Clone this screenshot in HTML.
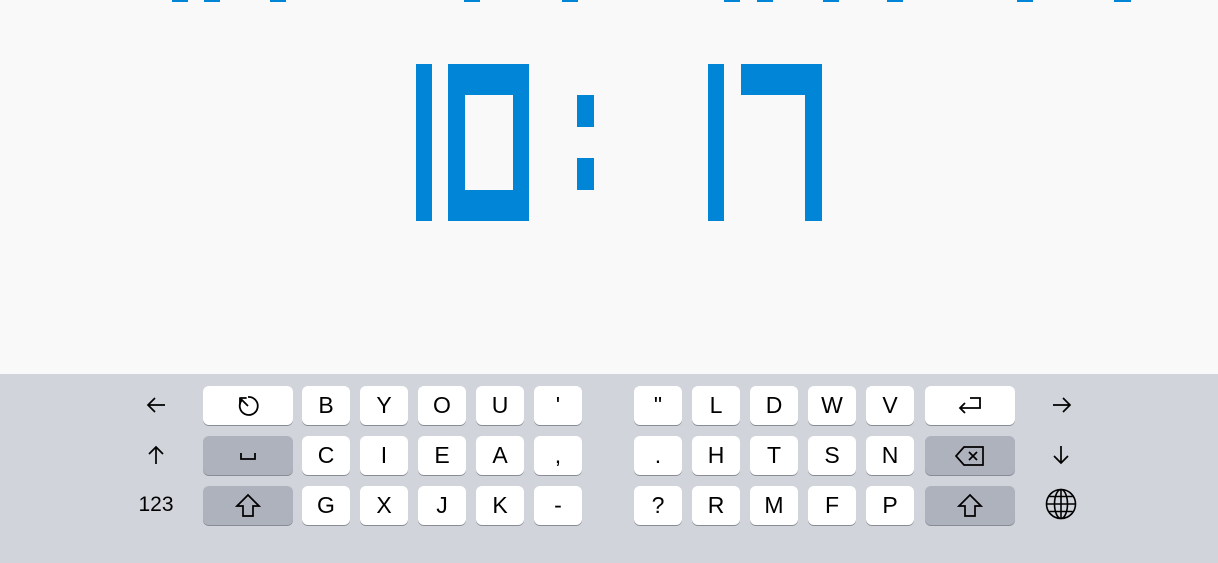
<!DOCTYPE html>
<html><head><meta charset="utf-8"><style>
*{margin:0;padding:0;box-sizing:border-box}
body{width:1218px;height:563px;background:#f9f9f9;position:relative;overflow:hidden;font-family:"Liberation Sans",sans-serif}
.b{position:absolute;background:#0085d7}
.kb{position:absolute;left:0;top:374px;width:1218px;height:189px;background:#d1d4da}
.k{position:absolute;width:48px;height:39px;background:#fff;border-radius:6px;box-shadow:0 1px 0 #888c94;display:flex;align-items:center;justify-content:center;font-size:23px;color:#000}
.w{width:90px}
.d{background:#adb2bc}
.t{position:absolute;font-size:21px;color:#000;width:50px;text-align:center}
.a{position:absolute}
svg{display:block}
</style></head><body>
<div class="b" style="left:172px;top:0;width:16px;height:2px"></div>
<div class="b" style="left:204px;top:0;width:16px;height:2px"></div>
<div class="b" style="left:270px;top:0;width:16px;height:2px"></div>
<div class="b" style="left:464px;top:0;width:16px;height:2px"></div>
<div class="b" style="left:562px;top:0;width:16px;height:2px"></div>
<div class="b" style="left:724px;top:0;width:16px;height:2px"></div>
<div class="b" style="left:757px;top:0;width:16px;height:2px"></div>
<div class="b" style="left:823px;top:0;width:16px;height:2px"></div>
<div class="b" style="left:887px;top:0;width:16px;height:2px"></div>
<div class="b" style="left:1017px;top:0;width:16px;height:2px"></div>
<div class="b" style="left:1114px;top:0;width:17px;height:2px"></div>

<div class="b" style="left:416px;top:64px;width:16px;height:157px"></div>
<div class="b" style="left:448px;top:64px;width:81px;height:157px"></div>
<div style="position:absolute;left:465px;top:95px;width:48px;height:95px;background:#f9f9f9"></div>
<div class="b" style="left:577px;top:95px;width:17px;height:32px"></div>
<div class="b" style="left:577px;top:158px;width:17px;height:32px"></div>
<div class="b" style="left:708px;top:64px;width:16px;height:157px"></div>
<div class="b" style="left:741px;top:64px;width:81px;height:31px"></div>
<div class="b" style="left:805px;top:64px;width:17px;height:157px"></div>

<div class="kb">
<div class="a" style="left:146px;top:22px"><svg width="20" height="18" viewBox="0 0 20 18" fill="none" stroke="#000" stroke-width="1.7"><path d="M19 9H2M9 2L2 9l7 7"/></svg></div>
<div class="a" style="left:147px;top:71px"><svg width="18" height="20" viewBox="0 0 18 20" fill="none" stroke="#000" stroke-width="1.7"><path d="M9 19V2M2 9l7-7 7 7"/></svg></div>
<div class="t" style="left:131px;top:119px">123</div>
<div class="a" style="left:1052px;top:22px"><svg width="20" height="18" viewBox="0 0 20 18" fill="none" stroke="#000" stroke-width="1.7"><path d="M1 9h17M11 2l7 7-7 7"/></svg></div>
<div class="a" style="left:1052px;top:71px"><svg width="18" height="20" viewBox="0 0 18 20" fill="none" stroke="#000" stroke-width="1.7"><path d="M9 1v17M2 11l7 7 7-7"/></svg></div>
<div class="a" style="left:1045px;top:114px"><svg width="32" height="32" viewBox="0 0 32 32" fill="none" stroke="#000" stroke-width="1.6"><circle cx="16" cy="16" r="14.5"/><ellipse cx="16" cy="16" rx="6.5" ry="14.5"/><line x1="16" y1="1.5" x2="16" y2="30.5"/><line x1="1.5" y1="16" x2="30.5" y2="16"/><path d="M4.5 8.5h23M4.5 23.5h23"/></svg></div>

<div class="k w" style="left:203px;top:12px"><svg width="26" height="26" viewBox="0 0 26 26" fill="none" stroke="#000" stroke-width="1.8"><path d="M7 7A9 9 0 1 0 13 4"/><path d="M6 6l7 7"/><path d="M5 5v6M5 5h6" stroke-linecap="round"/></svg></div>
<div class="k" style="left:302px;top:12px">B</div>
<div class="k" style="left:360px;top:12px">Y</div>
<div class="k" style="left:418px;top:12px">O</div>
<div class="k" style="left:476px;top:12px">U</div>
<div class="k" style="left:534px;top:12px">'</div>
<div class="k" style="left:634px;top:12px">"</div>
<div class="k" style="left:692px;top:12px">L</div>
<div class="k" style="left:750px;top:12px">D</div>
<div class="k" style="left:808px;top:12px">W</div>
<div class="k" style="left:866px;top:12px">V</div>
<div class="k w" style="left:925px;top:12px"><svg width="28" height="24" viewBox="0 0 28 24" fill="none" stroke="#000" stroke-width="1.8"><path d="M14 4h10v10H4"/><path d="M9 9l-5 5 5 5"/></svg></div>

<div class="k w d" style="left:203px;top:62px"><svg width="16" height="10" viewBox="0 0 16 10" fill="none" stroke="#000" stroke-width="1.8"><path d="M1 2v6h14V2"/></svg></div>
<div class="k" style="left:302px;top:62px">C</div>
<div class="k" style="left:360px;top:62px">I</div>
<div class="k" style="left:418px;top:62px">E</div>
<div class="k" style="left:476px;top:62px">A</div>
<div class="k" style="left:534px;top:62px">,</div>
<div class="k" style="left:634px;top:62px">.</div>
<div class="k" style="left:692px;top:62px">H</div>
<div class="k" style="left:750px;top:62px">T</div>
<div class="k" style="left:808px;top:62px">S</div>
<div class="k" style="left:866px;top:62px">N</div>
<div class="k w d" style="left:925px;top:62px"><svg width="32" height="24" viewBox="0 0 32 24" fill="none" stroke="#000" stroke-width="1.7"><path d="M10 3h19v18H10L2 12z"/><path d="M15 8l8 8M23 8l-8 8"/></svg></div>

<div class="k w d" style="left:203px;top:112px"><svg width="26" height="26" viewBox="0 0 26 26" fill="none" stroke="#000" stroke-width="1.7"><path d="M13 2L2 13h6v10h10V13h6z"/></svg></div>
<div class="k" style="left:302px;top:112px">G</div>
<div class="k" style="left:360px;top:112px">X</div>
<div class="k" style="left:418px;top:112px">J</div>
<div class="k" style="left:476px;top:112px">K</div>
<div class="k" style="left:534px;top:112px">-</div>
<div class="k" style="left:634px;top:112px">?</div>
<div class="k" style="left:692px;top:112px">R</div>
<div class="k" style="left:750px;top:112px">M</div>
<div class="k" style="left:808px;top:112px">F</div>
<div class="k" style="left:866px;top:112px">P</div>
<div class="k w d" style="left:925px;top:112px"><svg width="26" height="26" viewBox="0 0 26 26" fill="none" stroke="#000" stroke-width="1.7"><path d="M13 2L2 13h6v10h10V13h6z"/></svg></div>
</div>
</body></html>
